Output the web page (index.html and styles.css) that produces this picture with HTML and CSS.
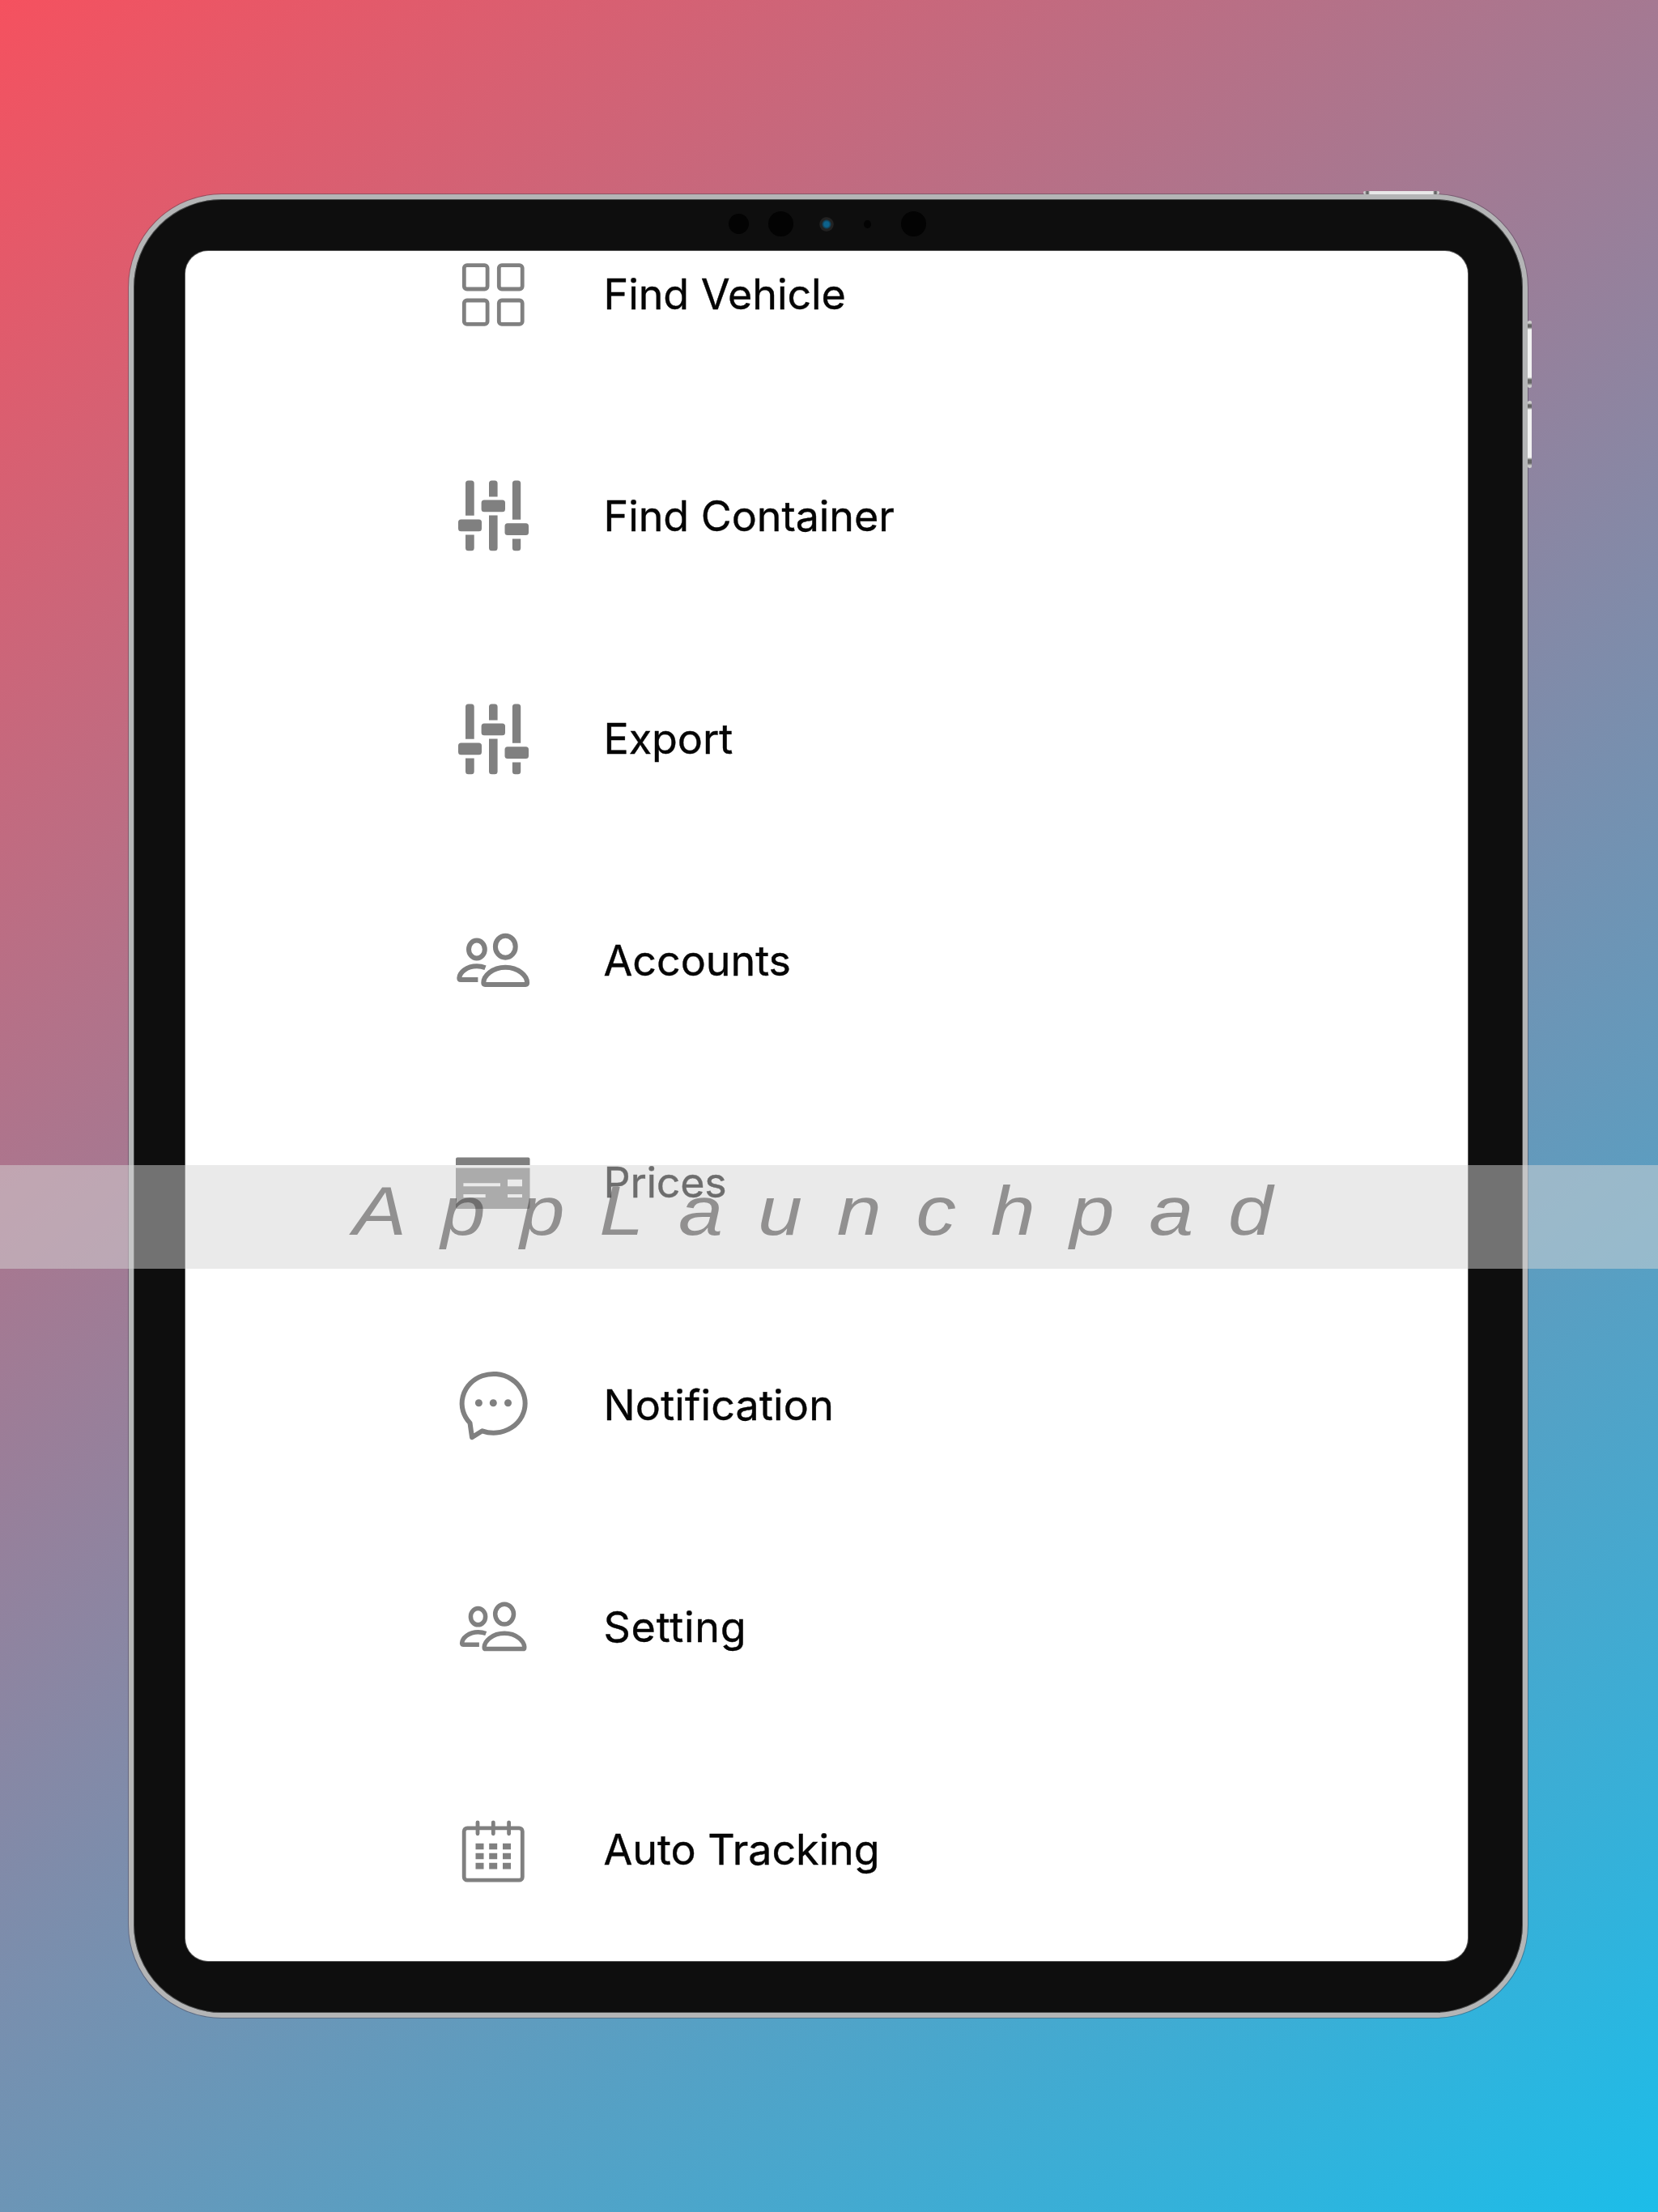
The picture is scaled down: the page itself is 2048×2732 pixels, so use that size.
FILE: index.html
```html
<!DOCTYPE html>
<html lang="en">
<head>
<meta charset="utf-8">
<title>Menu</title>
<link rel="stylesheet" href="styles.css">
</head>
<body>
<svg class="defs" aria-hidden="true">
  <symbol id="sliders" viewBox="0 0 100 100">
    <g fill="currentColor">
      <path d="M16 48.8V9q0-3.5 3.5-3.5h3.7q3.5 0 3.5 3.5v39.8zM16 72.5h10.7v16.2q0 3.5-3.5 3.5h-3.7q-3.5 0-3.5-3.5z"/>
      <path d="M45 25.5V9q0-3.5 3.5-3.5h3.6q3.5 0 3.5 3.5v16.5zM45 48.5h10.6v40.2q0 3.5-3.5 3.5h-3.6q-3.5 0-3.5-3.5z"/>
      <path d="M73.9 53.8V9q0-3.5 3.5-3.5h3.3q3.5 0 3.5 3.5v44.8zM73.9 77.5h10.3v11.2q0 3.5-3.5 3.5h-3.3q-3.5 0-3.5-3.5z"/>
      <rect x="7" y="53.5" width="29" height="14.7" rx="3.5"/>
      <rect x="35.6" y="29.5" width="29.4" height="14.7" rx="3.5"/>
      <rect x="64.5" y="58.2" width="29.5" height="14.7" rx="3.5"/>
    </g>
  </symbol>
  <symbol id="people" viewBox="0 0 100 100">
    <g fill="none" stroke="currentColor" stroke-width="6" stroke-linejoin="round">
      <ellipse cx="29.9" cy="35.5" rx="9.9" ry="11"/>
      <ellipse cx="65.3" cy="32.2" rx="12.4" ry="13.5"/>
      <path d="M40.5 58.2Q35.500 56.300 30 56.300C17.500 56.300 8.700 64 8.300 71Q8.300 73 10 73H31.400"/>
      <path d="M38.300 76.800C38.300 68.500 49 57.800 65.300 57.800S92.100 68.500 92.100 76.800Q92.100 78.900 90.200 78.900H40.200Q38.300 78.900 38.300 76.800z"/>
    </g>
  </symbol>
</svg>
<main class="stage">
  <div class="tablet">
    <i class="key key-top"></i><i class="key key-up"></i><i class="key key-down"></i>
    <i class="lens lens-a"></i><i class="lens lens-b"></i><i class="lens lens-cam"></i><i class="lens lens-dot"></i><i class="lens lens-c"></i>
    <div class="panel">
      <ul class="menu">
        <li class="item"><svg class="icon" viewBox="0 0 100 100"><g fill="none" stroke="currentColor" stroke-width="4.8"><rect x="14.3" y="13.6" width="28.8" height="29.400" rx="3.5"/><rect x="57.3" y="13.6" width="28.9" height="29.400" rx="3.5"/><rect x="14.3" y="57" width="28.8" height="29.400" rx="3.5"/><rect x="57.3" y="57" width="28.9" height="29.400" rx="3.5"/></g></svg><span class="label">Find Vehicle</span></li>
        <li class="item"><svg class="icon"><use href="#sliders"/></svg><span class="label">Find Container</span></li>
        <li class="item"><svg class="icon icon-lower"><use href="#sliders"/></svg><span class="label">Export</span></li>
        <li class="item"><svg class="icon"><use href="#people"/></svg><span class="label">Accounts</span></li>
        <li class="item"><svg class="icon" viewBox="0 0 100 100"><path fill="currentColor" fill-rule="evenodd" d="M4 27v-7.500q0-2 2-2h87.500q2 0 2 2V27zM4 30.500h91.500V79q0 2-2 2H6q-2 0-2-2zM13.400 49.300v4H59v-4zM68 44.700v8.600h18v-8.600zM13.400 63v4h27.300v-4zM68 63v4h18v-4z"/></svg><span class="label label-prices">Prices</span></li>
        <li class="item"><svg class="icon" viewBox="0 0 100 100"><path fill="none" stroke="currentColor" stroke-width="6" stroke-linejoin="round" d="M21.500 71.500A39 36.400 0 1 1 36.700 81.300L24 89.200z"/><g fill="currentColor"><circle cx="32.400" cy="46.800" r="4.500"/><circle cx="50.300" cy="46.800" r="4.500"/><circle cx="68.500" cy="46.800" r="4.500"/></g></svg><span class="label label-wide">Notification</span></li>
        <li class="item"><svg class="icon icon-small"><use href="#people"/></svg><span class="label label-setting">Setting</span></li>
        <li class="item"><svg class="icon" viewBox="0 0 100 100"><g fill="none" stroke="currentColor" stroke-width="4.800"><rect x="14.200" y="22.800" width="72.100" height="64.400" rx="4"/><path stroke-linecap="round" d="M31 15.800v14M50.300 15.800v14M69.600 15.800v14"/></g><path fill="currentColor" d="M28.500 41.800h10v7.400h-10zM45.200 41.800h10v7.400h-10zM62 41.800h10v7.400H62zM28.500 53.800h10v7.400h-10zM45.200 53.800h10v7.400h-10zM62 53.800h10v7.400H62zM28.500 65.800h10v7.600h-10zM45.200 65.800h10v7.600h-10zM62 65.800h10v7.600H62z"/></svg><span class="label">Auto Tracking</span></li>
      </ul>
    </div>
  </div>
  <div class="watermark"><span class="watermark-text">AppLaunchpad</span></div>
</main>
</body>
</html>
```
FILE: styles.css
```css
body {
  margin: 0;
}

.defs {
  position: absolute;
  width: 0;
  height: 0;
}

.stage {
  position: relative;
  box-sizing: border-box;
  width: 2048px;
  height: 2732px;
  padding: 240px 161px 240px 159px;
  overflow: hidden;
  background: linear-gradient(142deg, #f5515f, #1cbde9);
}

.tablet {
  position: relative;
  box-sizing: border-box;
  height: 2252px;
  padding: 64px;
  border: 6px solid #b4b5b6;
  border-radius: 115px;
  background: #0e0e0e;
  box-shadow: inset 0 0 0 1px #4a4c4c, 0 0 0 1px rgba(70, 60, 75, 0.45);
}

.panel {
  box-sizing: border-box;
  width: 1584px;
  height: 2112px;
  overflow: hidden;
  border-radius: 28px;
  background: #fff;
  box-shadow: 0 0 0 1px #555;
}

.menu {
  margin: -83.500px 0 0;
  padding: 0 0 0 330px;
  list-style: none;
}

.item {
  display: flex;
  align-items: center;
  gap: 86.500px;
  height: 274.500px;
}

.icon {
  flex: none;
  width: 100px;
  height: 100px;
  color: #808080;
}

.icon-lower {
  margin-top: 2px;
}

.icon-small {
  width: 92px;
  height: 92px;
  margin: -2px 4px 0;
}

.label {
  font: 400 52px/60px Inter, sans-serif;
  letter-spacing: -0.05px;
  color: #050505;
  white-space: nowrap;
  -webkit-text-stroke: 0.4px currentColor;
}

.label-wide {
  letter-spacing: 0.15px;
}

.label-prices {
  margin-top: -2px;
  letter-spacing: -0.3px;
}

.label-setting {
  margin-top: -2px;
  letter-spacing: 0.75px;
}

.key {
  position: absolute;
  border-radius: 2px;
}

.key-top {
  left: 1519px;
  top: -10px;
  width: 94px;
  height: 4px;
  background: linear-gradient(90deg, #ccc 0 2px, #666 4px 6px, #e8e8e8 8px 86px, #666 88px 90px, #ccc 92px);
}

.key-up,
.key-down {
  left: 1722px;
  width: 5px;
  height: 83px;
  background: linear-gradient(#ccc 0 3px, #666 5px 8px, #f2f2f2 11px 70px, #666 73px 77px, #ccc 80px);
}

.key-up {
  top: 150px;
}

.key-down {
  top: 249px;
}

.lens {
  position: absolute;
  border-radius: 50%;
  background: #030303;
}

.lens-a { left: 735px; top: 18px; width: 25px; height: 25px; }
.lens-b { left: 784px; top: 15px; width: 31px; height: 31px; }
.lens-cam { left: 847px; top: 22px; width: 18px; height: 18px; background: radial-gradient(circle, #0d628c 0 3px, #123d52 5px, #222 6px 8px, #181818 9px); }
.lens-dot { left: 902px; top: 26px; width: 9px; height: 10px; }
.lens-c { left: 948px; top: 15px; width: 31px; height: 31px; }

.watermark {
  position: absolute;
  left: 0;
  top: 1438.500px;
  width: 2048px;
  height: 128px;
  background: rgba(213, 213, 213, 0.5);
}

.watermark-text {
  display: block;
  width: 1200px;
  margin-left: 436px;
  font: italic 400 86px/112px "Liberation Sans", Arial, sans-serif;
  letter-spacing: 37.200px;
  white-space: nowrap;
  color: rgba(38, 35, 36, 0.45);
  transform: scaleX(1.15);
  transform-origin: 0 0;
}
```
